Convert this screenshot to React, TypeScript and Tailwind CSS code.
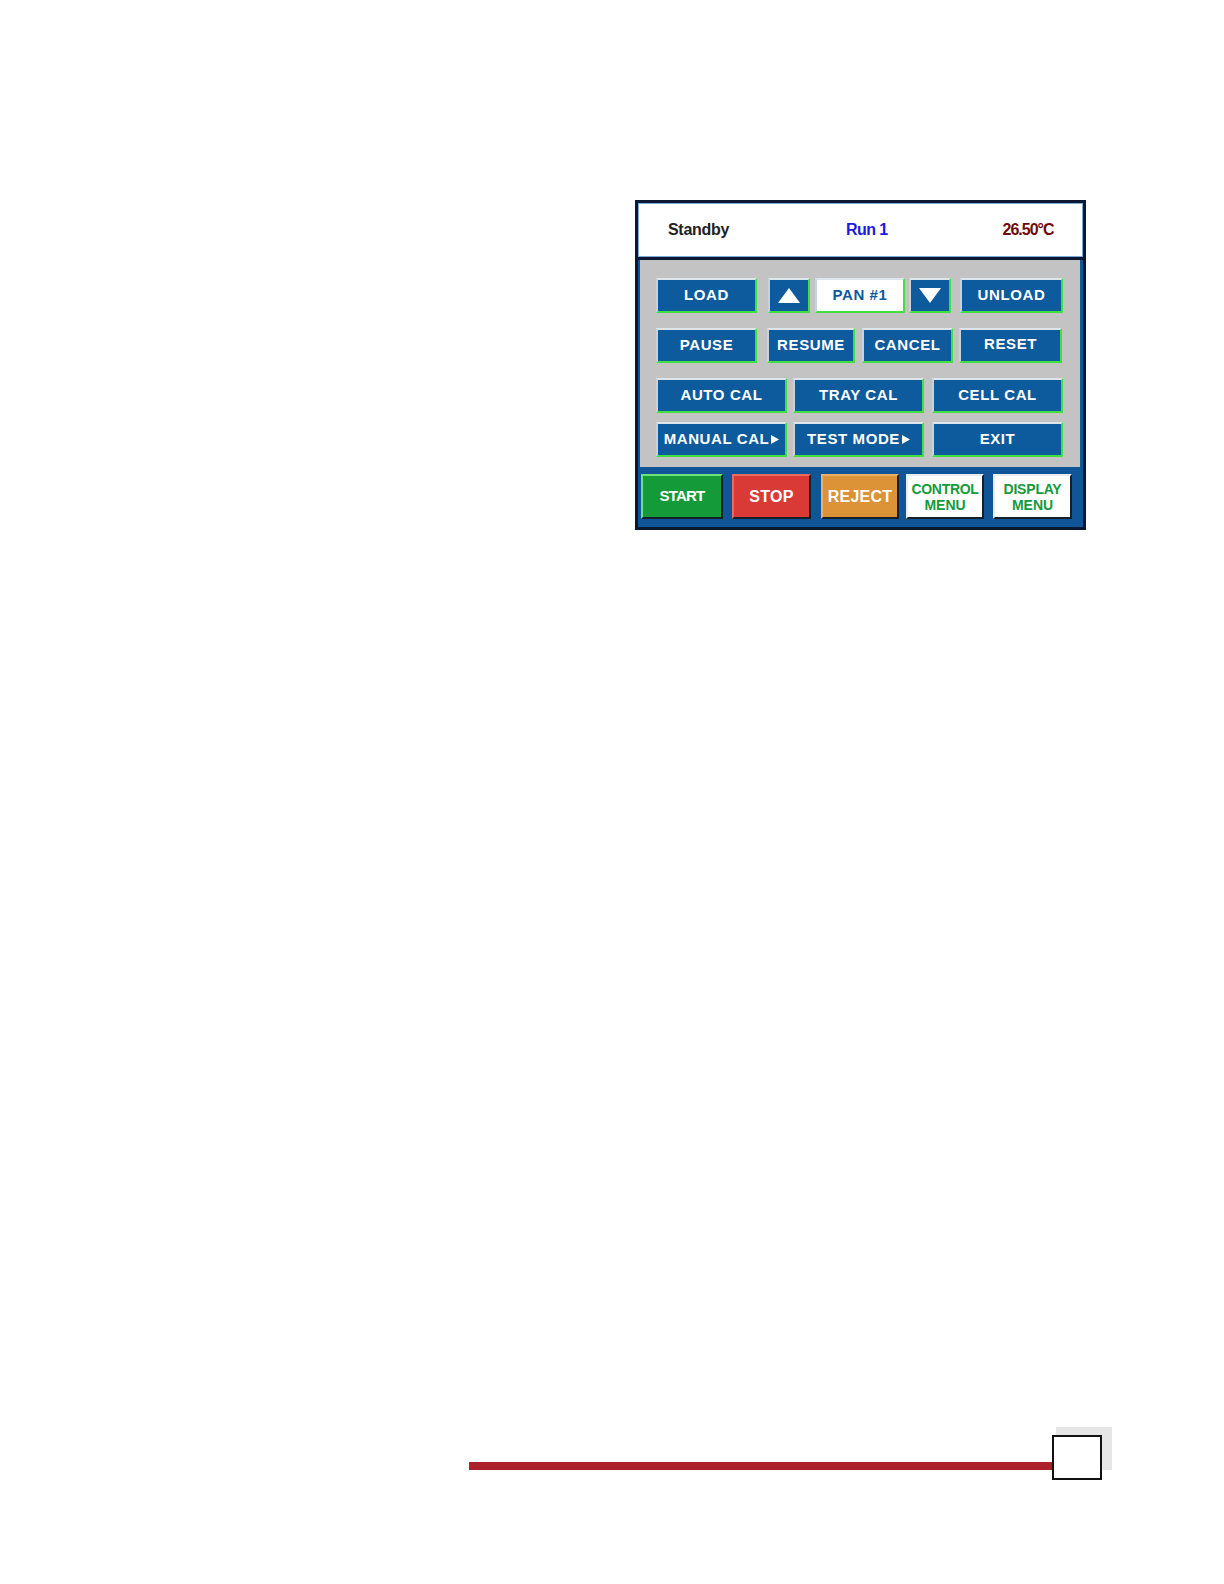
import type { ReactNode } from "react";

const font = { fontFamily: '"Liberation Sans", Arial, sans-serif' };

function UpTri() {
  return (
    <svg width="22" height="15" viewBox="0 0 22 15">
      <polygon points="11,0 22,15 0,15" fill="#ffffff" />
    </svg>
  );
}

function DownTri() {
  return (
    <svg width="22" height="15" viewBox="0 0 22 15">
      <polygon points="0,0 22,0 11,15" fill="#ffffff" />
    </svg>
  );
}

function SmallArrow() {
  return (
    <svg width="8" height="9" viewBox="0 0 8 9" className="ml-[2px]">
      <polygon points="0,0 8,4.5 0,9" fill="#ffffff" />
    </svg>
  );
}

type BtnProps = {
  w: string;
  children: ReactNode;
  className?: string;
  white?: boolean;
};

function BlueBtn({ w, children, className = "", white = false }: BtnProps) {
  return (
    <div
      className={`${w} h-[35px] flex items-center justify-center border-t-2 border-l-2 border-b-2 border-r-2 border-t-[#dde4ea] border-l-[#c8d2dc] border-b-[#3fe03f] border-r-[#3fe03f] text-[15px] font-bold tracking-[0.6px] ${
        white ? "bg-white text-[#0d5a9c]" : "bg-[#0d5a9c] text-white"
      } ${className}`}
    >
      {children}
    </div>
  );
}

type CmdProps = {
  w: string;
  ml: string;
  bg: string;
  children: ReactNode;
};

function CmdBtn({ w, ml, bg, children }: CmdProps) {
  return (
    <div
      className={`${w} ${ml} ${bg} h-[45px] flex flex-col items-center justify-center border-t-2 border-l-2 border-b-2 border-r-2 border-b-[#13202c] border-r-[#13202c] font-bold`}
    >
      {children}
    </div>
  );
}

export default function App() {
  return (
    <div className="w-[1224px] h-[1584px] bg-white pt-[200px]" style={font}>
      <div className="ml-[635px] w-[451px] h-[330px] border-[3px] border-[#0a1730] bg-[#0f5597] flex flex-col">
        {/* status header */}
        <div className="h-[57px] border-b-[3px] border-[#0a1730]">
          <div className="h-full bg-white border border-[#7eaad8] flex items-center">
            <span className="ml-[29px] text-[16px] font-bold tracking-[-0.3px] text-[#222222]">
              Standby
            </span>
            <span className="ml-[117px] text-[16px] font-bold tracking-[-0.6px] text-[#1a1ae0]">
              Run 1
            </span>
            <span className="ml-[115px] text-[16px] font-bold tracking-[-1px] text-[#6e0a0a]">
              26.50°C
            </span>
          </div>
        </div>

        {/* command grid */}
        <div className="h-[207px] ml-[2px] mr-[3px] bg-[#c3c3c3] pl-[16px] pt-[18px] flex flex-col">
          <div className="flex">
            <BlueBtn w="w-[101px]">LOAD</BlueBtn>
            <BlueBtn w="w-[42px]" className="ml-[11px]">
              <UpTri />
            </BlueBtn>
            <BlueBtn w="w-[90px]" className="ml-[5px]" white>
              PAN #1
            </BlueBtn>
            <BlueBtn w="w-[42px]" className="ml-[4px]">
              <DownTri />
            </BlueBtn>
            <BlueBtn w="w-[103px]" className="ml-[9px]">
              UNLOAD
            </BlueBtn>
          </div>
          <div className="flex mt-[15px]">
            <BlueBtn w="w-[101px]">PAUSE</BlueBtn>
            <BlueBtn w="w-[88px]" className="ml-[10px]">
              RESUME
            </BlueBtn>
            <BlueBtn w="w-[91px]" className="ml-[7px]">
              CANCEL
            </BlueBtn>
            <BlueBtn w="w-[103px]" className="ml-[6px] pb-[3px]">
              RESET
            </BlueBtn>
          </div>
          <div className="flex mt-[15px]">
            <BlueBtn w="w-[131px]">AUTO CAL</BlueBtn>
            <BlueBtn w="w-[131px]" className="ml-[6px]">
              TRAY CAL
            </BlueBtn>
            <BlueBtn w="w-[131px]" className="ml-[8px]">
              CELL CAL
            </BlueBtn>
          </div>
          <div className="flex mt-[9px]">
            <BlueBtn w="w-[131px]">
              MANUAL CAL
              <SmallArrow />
            </BlueBtn>
            <BlueBtn w="w-[131px]" className="ml-[6px]">
              TEST MODE
              <SmallArrow />
            </BlueBtn>
            <BlueBtn w="w-[131px]" className="ml-[8px]">
              EXIT
            </BlueBtn>
          </div>
        </div>

        {/* run controls */}
        <div className="flex pl-[3px] pt-[7px]">
          <CmdBtn w="w-[82px]" ml="ml-0" bg="bg-[#149a38] border-t-[#6fe07a] border-l-[#6fe07a]">
            <span className="text-[15px] text-white tracking-[-0.8px]">START</span>
          </CmdBtn>
          <CmdBtn w="w-[79px]" ml="ml-[9px]" bg="bg-[#d93a36] border-t-[#e86a5e] border-l-[#e86a5e]">
            <span className="text-[16px] text-white tracking-[0.3px]">STOP</span>
          </CmdBtn>
          <CmdBtn w="w-[78px]" ml="ml-[10px]" bg="bg-[#dc9236] border-t-[#eab06a] border-l-[#eab06a]">
            <span className="text-[16px] text-white tracking-[0.2px]">REJECT</span>
          </CmdBtn>
          <CmdBtn w="w-[78px]" ml="ml-[7px]" bg="bg-white border-t-[#e8eef0] border-l-[#e8eef0]">
            <span className="text-[14px] leading-[16px] text-[#169a3a] tracking-[-0.3px]">
              CONTROL
            </span>
            <span className="text-[14px] leading-[16px] text-[#169a3a]">MENU</span>
          </CmdBtn>
          <CmdBtn w="w-[79px]" ml="ml-[9px]" bg="bg-white border-t-[#e8eef0] border-l-[#e8eef0]">
            <span className="text-[14px] leading-[16px] text-[#169a3a] tracking-[-0.2px]">
              DISPLAY
            </span>
            <span className="text-[14px] leading-[16px] text-[#169a3a]">MENU</span>
          </CmdBtn>
        </div>
      </div>

      {/* page footer */}
      <div className="mt-[897px] ml-[469px] flex">
        <div className="w-[583px] h-[8px] mt-[35px] bg-[#ad212d]" />
        <div className="relative w-[60px] h-[53px]">
          <div className="absolute left-[4px] top-0 w-[56px] h-[43px] bg-[#e6e6e6]" />
          <div className="absolute left-0 top-[8px] w-[50px] h-[45px] bg-white border-2 border-[#111111]" />
        </div>
      </div>
    </div>
  );
}
